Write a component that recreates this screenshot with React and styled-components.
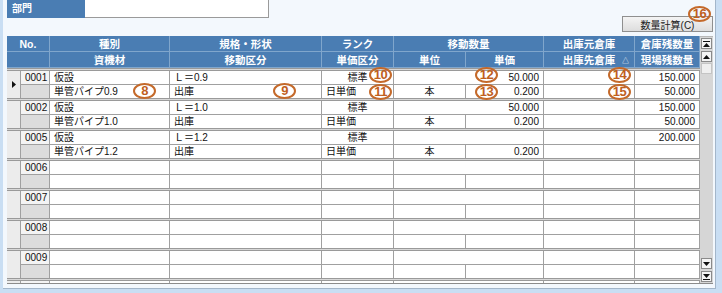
import React from "react";
import styled, { createGlobalStyle } from "styled-components";

const GlobalStyle = createGlobalStyle`
  html, body { margin: 0; padding: 0; }
  body {
    background: #c9def3;
    font-family: "Liberation Sans", "Noto Sans CJK JP", sans-serif;
  }
`;

const COLS = "14px 29px 120px 152px 72px 72px 78px 91px 65px";

const Window = styled.div`
  position: relative;
  width: 722px;
  height: 293px;
  box-sizing: border-box;
  padding: 0 6px 4px 3px;
  background: #c9def3;
  display: flex;
  overflow: hidden;
`;

const Panel = styled.div`
  flex: 1;
  min-width: 0;
  background: #f3f8fd;
  border-right: 1px solid #a3b6ca;
  border-bottom: 1px solid #a3b6ca;
  padding: 0 2px 0 4px;
  display: flex;
  flex-direction: column;
  overflow: hidden;
`;

const TopBar = styled.div`
  display: flex;
  height: 18px;
`;

const Label = styled.div`
  width: 78px;
  background: #4a7db3;
  color: #fff;
  font-size: 10px;
  font-weight: bold;
  display: flex;
  align-items: flex-end;
  padding: 0 0 3px 5px;
  box-sizing: border-box;
  overflow: hidden;
`;

const Input = styled.div`
  width: 184px;
  background: #fff;
  border-right: 1px solid #9a9a9a;
  border-bottom: 1px solid #9a9a9a;
  box-sizing: border-box;
`;

const ButtonRow = styled.div`
  display: flex;
  justify-content: flex-end;
  margin-top: -2px;
`;

const Button = styled.button`
  width: 91px;
  height: 16px;
  padding: 0;
  border: 1px solid #8f8f8f;
  background: linear-gradient(#f4f4f4, #dddddd);
  font-family: inherit;
  font-size: 10px;
  color: #222;
`;

const TableBox = styled.div`
  margin-top: 4px;
  height: 248px;
  display: flex;
  border-bottom: 1px solid #8c8c8c;
  box-sizing: border-box;
`;

const GridArea = styled.div`
  width: 693px;
  display: flex;
  flex-direction: column;
  overflow: hidden;
`;

const Header = styled.div`
  display: grid;
  grid-template-columns: ${COLS};
  grid-template-rows: 16px 16px;
  background: #4a7db3;
`;

const HeadCell = styled.div`
  grid-column: span ${p => p.$span || 1};
  position: relative;
  box-sizing: border-box;
  border-right: 1px solid #80a6cc;
  border-bottom: 1px solid #80a6cc;
  color: #fff;
  font-size: 10.5px;
  font-weight: bold;
  display: flex;
  align-items: center;
  justify-content: center;
  white-space: nowrap;
`;

const SortMark = styled.span`
  position: absolute;
  right: 5px;
  top: 3px;
  font-size: 7px;
  font-weight: normal;
`;

const Body = styled.div`
  flex: 1;
  overflow: hidden;
`;

const Record = styled.div`
  display: grid;
  grid-template-columns: ${COLS};
  grid-template-rows: 14px 13px;
  border-top: 3px double #9a9a9a;
  background: #d8d8d8;
`;

const Selector = styled.div`
  grid-row: span 2;
  background: #ececec;
  border-right: 1px solid #a0a0a0;
  display: flex;
  align-items: center;
  justify-content: center;
`;

const Cell = styled.div`
  grid-column: span ${p => p.$span || 1};
  box-sizing: border-box;
  border-right: 1px solid #a0a0a0;
  border-bottom: ${p => (p.$top ? "1px solid #a0a0a0" : "none")};
  background: ${p => p.$bg || "#fff"};
  color: #111;
  font-size: 10px;
  line-height: 13px;
  padding: 0 4px;
  text-align: ${p => p.$align || "left"};
  white-space: nowrap;
  overflow: hidden;
`;

const Scrollbar = styled.div`
  width: 13px;
  background: #d6d6d6;
  border-top: 1px solid #b8b8b8;
  box-sizing: border-box;
  display: flex;
  flex-direction: column;
  gap: 2px;
  padding: 1px 1px 1px;
`;

const ScrollBtn = styled.div`
  height: 11px;
  box-sizing: border-box;
  background: #f4f4f4;
  border: 1px solid #8a8a8a;
  display: flex;
  align-items: center;
  justify-content: center;
`;

const Thumb = styled.div`
  height: 9px;
  background: #efefef;
  border: 1px solid #c4c4c4;
  margin-top: -1px;
`;

const Spacer = styled.div`
  flex: 1;
`;

const Marker = styled.span`
  position: absolute;
  left: ${p => p.$x - 11}px;
  top: ${p => p.$y - 8}px;
  width: 23px;
  height: 16px;
  box-sizing: border-box;
  border: 2px solid #c4692a;
  border-radius: 50%;
  color: #c0601e;
  font-family: "Liberation Sans", sans-serif;
  font-size: 13px;
  font-weight: bold;
  line-height: 12px;
  text-align: center;
  letter-spacing: -0.5px;
`;

const Arrow = ({ dir, bar }) => (
  <svg width="7" height="6" viewBox="0 0 7 6">
    {dir === "up" ? (
      <>
        {bar && <rect x="0" y="0" width="7" height="1" fill="#111" />}
        <polygon points={bar ? "3.5,2 7,6 0,6" : "3.5,1 7,5 0,5"} fill="#111" />
      </>
    ) : (
      <>
        <polygon points={bar ? "0,0 7,0 3.5,4" : "0,1 7,1 3.5,5"} fill="#111" />
        {bar && <rect x="0" y="5" width="7" height="1" fill="#111" />}
      </>
    )}
  </svg>
);

const records = [
  {
    no: "0001", current: true,
    a: ["仮設", "Ｌ＝0.9", "標準", "50.000", "", "150.000"],
    b: ["単管パイプ0.9", "出庫", "日単価", "本", "0.200", "", "50.000"],
  },
  {
    no: "0002",
    a: ["仮設", "Ｌ＝1.0", "標準", "50.000", "", "150.000"],
    b: ["単管パイプ1.0", "出庫", "日単価", "本", "0.200", "", "50.000"],
  },
  {
    no: "0005",
    a: ["仮設", "Ｌ＝1.2", "標準", "", "", "200.000"],
    b: ["単管パイプ1.2", "出庫", "日単価", "本", "0.200", "", ""],
  },
  { no: "0006" },
  { no: "0007" },
  { no: "0008" },
  { no: "0009" },
  { no: "0010" },
];

const topAlign = ["left", "left", "center", "right", "left", "right"];
const topSpan = [1, 1, 1, 2, 1, 1];
const bottomAlign = ["left", "left", "left", "center", "right", "left", "right"];

const markers = [
  { n: 8, x: 144, y: 91 },
  { n: 9, x: 284, y: 91 },
  { n: 10, x: 380, y: 75 },
  { n: 11, x: 380, y: 92 },
  { n: 12, x: 486, y: 75 },
  { n: 13, x: 486, y: 92 },
  { n: 14, x: 619, y: 75 },
  { n: 15, x: 619, y: 92 },
  { n: 16, x: 699, y: 14 },
];

const App = () => {
  return (
    <Window>
      <GlobalStyle />
      <Panel>
        <TopBar>
          <Label>部門</Label>
          <Input />
        </TopBar>
        <ButtonRow>
          <Button>数量計算(C)</Button>
        </ButtonRow>
        <TableBox>
          <GridArea>
            <Header>
              <HeadCell $span={2}>No.</HeadCell>
              <HeadCell>種別</HeadCell>
              <HeadCell>規格・形状</HeadCell>
              <HeadCell>ランク</HeadCell>
              <HeadCell $span={2}>移動数量</HeadCell>
              <HeadCell>出庫元倉庫</HeadCell>
              <HeadCell>倉庫残数量</HeadCell>
              <HeadCell $span={2} />
              <HeadCell>資機材</HeadCell>
              <HeadCell>移動区分</HeadCell>
              <HeadCell>単価区分</HeadCell>
              <HeadCell>単位</HeadCell>
              <HeadCell>単価</HeadCell>
              <HeadCell>
                出庫先倉庫<SortMark>△</SortMark>
              </HeadCell>
              <HeadCell>現場残数量</HeadCell>
            </Header>
            <Body>
              {records.map(rec => {
                const a = rec.a || ["", "", "", "", "", ""];
                const b = rec.b || ["", "", "", "", "", "", ""];
                return (
                  <Record key={rec.no}>
                    <Selector>
                      {rec.current && (
                        <svg width="4" height="7" viewBox="0 0 4 7">
                          <polygon points="0,0 4,3.5 0,7" fill="#111" />
                        </svg>
                      )}
                    </Selector>
                    <Cell $top $bg="#f4f4f4" $align="center">{rec.no}</Cell>
                    {a.map((v, i) => (
                      <Cell key={"a" + i} $top $span={topSpan[i]} $align={topAlign[i]}>
                        {v}
                      </Cell>
                    ))}
                    <Cell $bg="#dcdcdc" />
                    {b.map((v, i) => (
                      <Cell key={"b" + i} $align={bottomAlign[i]}>
                        {v}
                      </Cell>
                    ))}
                  </Record>
                );
              })}
            </Body>
          </GridArea>
          <Scrollbar>
            <ScrollBtn><Arrow dir="up" bar /></ScrollBtn>
            <ScrollBtn><Arrow dir="up" /></ScrollBtn>
            <Thumb />
            <Spacer />
            <ScrollBtn><Arrow dir="down" /></ScrollBtn>
            <ScrollBtn><Arrow dir="down" bar /></ScrollBtn>
          </Scrollbar>
        </TableBox>
      </Panel>
      {markers.map(m => (
        <Marker key={m.n} $x={m.x} $y={m.y}>{m.n}</Marker>
      ))}
    </Window>
  );
};

export default App;
